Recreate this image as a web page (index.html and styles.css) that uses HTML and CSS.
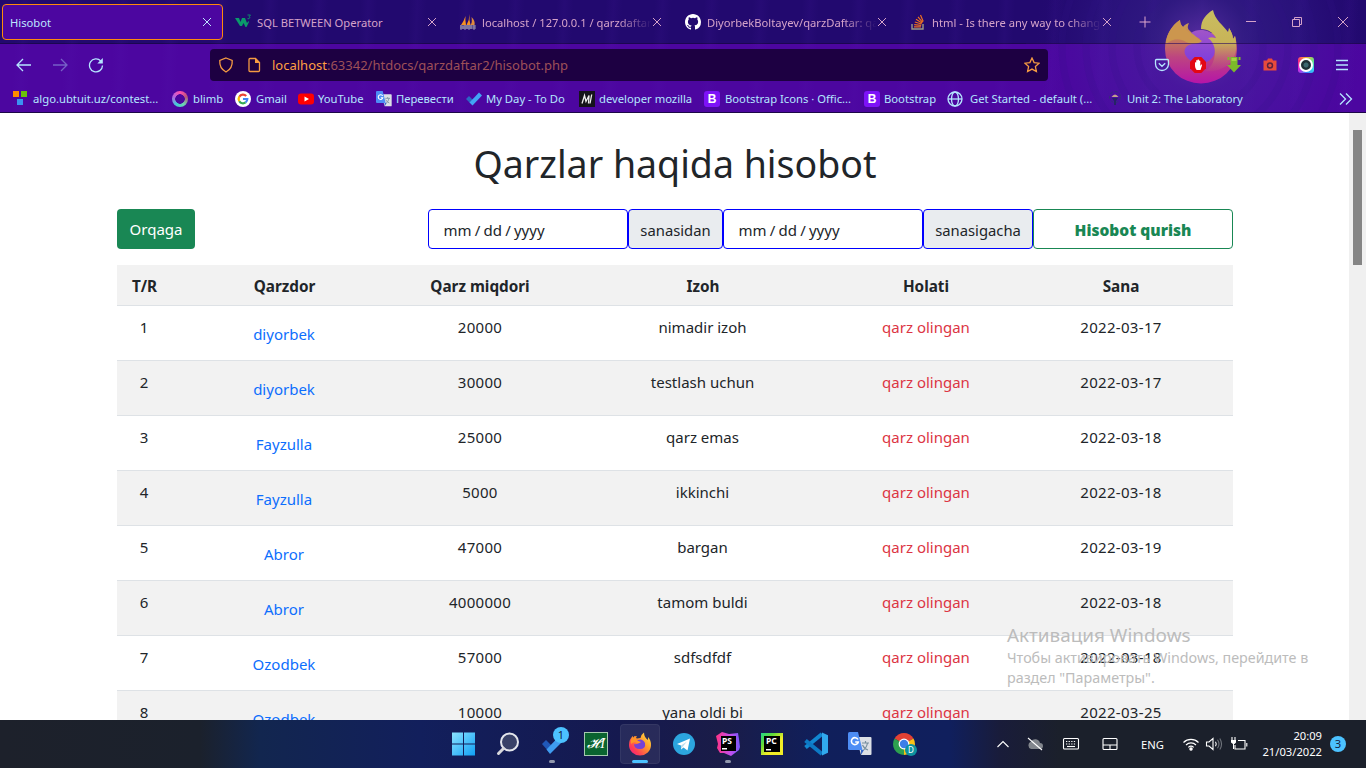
FILE: index.html
```html
<!DOCTYPE html>
<html lang="uz">
<head>
<meta charset="utf-8">
<title>Hisobot</title>
<link rel="stylesheet" href="styles.css">
</head>
<body>
<div class="screen">
<header class="browser">
  <svg class="theme-art" width="340" height="112" viewBox="0 0 340 112">
    <defs>
      <radialGradient id="glow" cx="174" cy="42" r="165" gradientUnits="userSpaceOnUse"><stop offset="0" stop-color="#6a38b0" stop-opacity=".8"/><stop offset=".3" stop-color="#43309a" stop-opacity=".4"/><stop offset=".65" stop-color="#402bA0" stop-opacity=".22"/><stop offset="1" stop-color="#35108c" stop-opacity="0"/></radialGradient>
      <linearGradient id="fx" x1="0" y1="18" x2="0" y2="83" gradientUnits="userSpaceOnUse"><stop offset="0" stop-color="#c9a452"/><stop offset=".3" stop-color="#c68254"/><stop offset=".6" stop-color="#bd4580"/><stop offset="1" stop-color="#b615a8"/></linearGradient>
      <linearGradient id="fy" x1="0" y1="10" x2="0" y2="74" gradientUnits="userSpaceOnUse"><stop offset="0" stop-color="#c9bd60"/><stop offset=".5" stop-color="#c8b458"/><stop offset="1" stop-color="#bc3f87" stop-opacity=".2"/></linearGradient>
      <linearGradient id="fp" x1="0" y1="30" x2="0" y2="62" gradientUnits="userSpaceOnUse"><stop offset="0" stop-color="#a055c8"/><stop offset="1" stop-color="#7e3ddd"/></linearGradient>
    </defs>
    <rect width="340" height="112" fill="url(#glow)"/>
    <g fill="none" stroke="#2f118b" stroke-opacity=".16" stroke-width="7"><circle cx="174" cy="47" r="63"/><circle cx="174" cy="47" r="88"/><circle cx="174" cy="47" r="114"/><circle cx="174" cy="47" r="138"/></g>
    <g transform="translate(114 0)">
      <path d="M40 20c-9 6-15 16-15 29a36 34.500 0 0 0 72 0c0-5-1-9-2-13l-2 3c0-4-2-8-4-11v5L74 33H52l-3-3c-2-2-1-5 0-7-3 1-5 2-6 4-2-2-3-4-3-7z" fill="url(#fx)"/>
      <path d="M73 10c-7 4-12 10-12 19 7 0 13 4 15 9-4-1-7-1-9 0 7 5 10 15 6 24-2 5-5 7-8 9 16 2 31-8 31-23 0-5 0-8-1-12l-2 3c0-4-2-8-4-11l-1 4c-5-7-13-12-15-22z" fill="url(#fy)"/>
      <path d="M51 33c6-5 20-4 25 5-3-1-5-1-8 0 7 5 9 15 4 20-7 8-20 7-26-2-3-5-1-9 3-11 4-2 8-1 12-4-2-5-8-3-10-8z" fill="url(#fp)"/>
      <path d="M40 20c-8 5-14 15-14 24 7-6 14-6 20-2 6 3 13 2 16-1-5-2-7-7-13-9-3-2-5-5-6-5-2-2-3-4-3-7z" fill="#cc964e"/>
    </g>
    <path d="M0 43h340v1H0z" fill="#24075d" opacity=".6"/>
  </svg>
  <div class="tabs">
    <div class="tab active"><span class="tab-title">Hisobot</span><i class="x">
      <svg width="10" height="10" viewBox="0 0 10 10"><path d="M1 1l8 8M9 1L1 9"/></svg></i></div>
    <div class="tab">
      <svg class="fav" width="16" height="16" viewBox="0 0 16 16"><path d="M0 4h4l1.500 4L7 4h3l2 5 1.500-2 .5 1-2.500 5h-1L8.500 9 7 12H5z" fill="#0b9a6b"/><path d="M12.500 1h3L14 2.700q2 .5 0 2h-1.500" fill="none" stroke="#0b9a6b" stroke-width=".9"/></svg>
      <span class="tab-title">SQL BETWEEN Operator</span><i class="x"><svg width="10" height="10" viewBox="0 0 10 10"><path d="M1 1l8 8M9 1L1 9"/></svg></i></div>
    <div class="tab">
      <svg class="fav" width="16" height="16" viewBox="0 0 16 16"><path d="M5.500 2Q5 6 6 11H1Q4 7 5.500 2zM9.500 0Q9 6 10.500 11H6.500Q9.500 6 9.500 0z" fill="#f59222"/><path d="M11.500 3q4 4 3 8h-4q2-3 1-8z" fill="#e08b3c"/><path d="M0 12h16M1 11v5m2-4v3m2-4v5m2-5v4m2-4v5m2-5v4m3-4v5M0 14h16" stroke="#a5a5b9" stroke-width=".9"/></svg>
      <span class="tab-title fade">localhost / 127.0.0.1 / qarzdaftar</span><i class="x"><svg width="10" height="10" viewBox="0 0 10 10"><path d="M1 1l8 8M9 1L1 9"/></svg></i></div>
    <div class="tab">
      <svg class="fav" width="16" height="16" viewBox="0 0 16 16"><path fill="#fff" d="M8 0C3.580 0 0 3.580 0 8c0 3.540 2.290 6.530 5.470 7.590.4.070.55-.17.55-.38 0-.19-.01-.82-.01-1.490-2.010.37-2.530-.49-2.690-.94-.09-.23-.48-.94-.82-1.130-.28-.15-.68-.52-.01-.53.63-.01 1.080.58 1.230.82.72 1.210 1.870.87 2.330.66.070-.52.28-.87.51-1.070-1.780-.2-3.640-.89-3.640-3.950 0-.87.31-1.590.82-2.150-.08-.2-.36-1.020.08-2.120 0 0 .67-.21 2.200.82a7.600 7.600 0 0 1 4 0c1.530-1.040 2.200-.82 2.200-.82.44 1.100.16 1.920.08 2.120.51.56.82 1.270.82 2.150 0 3.070-1.870 3.750-3.650 3.950.29.25.54.73.54 1.480 0 1.070-.01 1.930-.01 2.200 0 .21.15.46.55.38A8 8 0 0 0 16 8c0-4.420-3.580-8-8-8z"/></svg>
      <span class="tab-title fade">DiyorbekBoltayev/qarzDaftar: qarz</span><i class="x"><svg width="10" height="10" viewBox="0 0 10 10"><path d="M1 1l8 8M9 1L1 9"/></svg></i></div>
    <div class="tab">
      <svg class="fav" width="16" height="16" viewBox="0 0 16 16" fill="none"><path d="M2 10v5h11v-5" stroke="#9a9a86" stroke-width="1.400"/><path d="M4 12.800h7M4.200 10.600l7 .8M4.800 8l6.800 2M6 5.300l6 3.800M8 2.800l4.600 5.500M10.500 1l2.700 6.500" stroke="#ee6f20" stroke-width="1.200"/></svg>
      <span class="tab-title fade">html - Is there any way to change</span><i class="x"><svg width="10" height="10" viewBox="0 0 10 10"><path d="M1 1l8 8M9 1L1 9"/></svg></i></div>
    <svg class="plus" width="12" height="12" viewBox="0 0 12 12"><path d="M6 .5v11M.5 6h11"/></svg>
    <div class="win">
      <svg width="12" height="12" viewBox="0 0 12 12"><path d="M1 5.500h10"/></svg>
      <svg width="12" height="12" viewBox="0 0 12 12"><path d="M1.500 3.500h7v7h-7zM3.500 3.500v-2h7v7h-2"/></svg>
      <svg width="12" height="12" viewBox="0 0 12 12"><path d="M1 1l10 10M11 1L1 11"/></svg>
    </div>
  </div>
  <div class="nav">
    <svg class="ic" width="16" height="16" viewBox="0 0 16 16"><path d="M15 8H1.500M7 2L1 8l6 6"/></svg>
    <svg class="ic dim" width="16" height="16" viewBox="0 0 16 16"><path d="M1 8h13.500M9 2l6 6-6 6"/></svg>
    <svg class="ic" width="16" height="16" viewBox="0 0 16 16"><path d="M12.800 4A6.500 6.500 0 1 0 14.500 8.500"/><path d="M14.800 1v5.500H9.300z" fill="#b5e6ff" stroke="none"/></svg>
    <div class="url">
      <svg width="16" height="16" viewBox="0 0 16 16"><path d="M8 1l6.200 2.500c.4 5-1.500 9-6.200 11.500C3.300 12.500 1.400 8.500 1.800 3.500z"/></svg>
      <svg width="14" height="16" viewBox="0 0 14 16"><path d="M3 1.500h5.500L12.500 5.500v8q0 1-1 1H3q-1 0-1-1v-11q0-1 1-1z"/><path d="M8 1l5 5H8z" fill="#f59a42" stroke="none"/></svg>
      <span class="addr"><b>localhost</b>:63342/htdocs/qarzdaftar2/hisobot.php</span>
      <svg class="star" width="16" height="16" viewBox="0 0 16 16"><path d="M8 1l2.100 4.600 5 .6-3.700 3.400 1 5L8 12.100l-4.400 2.500 1-5L.9 6.200l5-.6z"/></svg>
    </div>
    <div class="ext">
      <svg class="ic" width="16" height="16" viewBox="0 0 16 16"><path d="M2.500 2.500h11q1 0 1 1V7a6.500 6.500 0 0 1-13 0V3.500q0-1 1-1zM4.800 6.200L8 9.300l3.200-3.100"/></svg>
      <svg width="16" height="16" viewBox="0 0 16 16"><path d="M4.700 0h6.600L16 4.700v6.600L11.300 16H4.700L0 11.300V4.700z" fill="#e30713"/><path d="M5 5.500q.7-.7 1.200 0V3.500q.7-.8 1.300 0V2.800q.8-.8 1.500 0v1q.8-.7 1.300.1v5l.9-1.300q1-.4.9.5L10.500 13H6.600Q5 11 5 9z" fill="#fff"/></svg>
      <svg width="16" height="16" viewBox="0 0 16 16"><path d="M1.500 0h2v3h-2zM12.500 0h2v3h-2zM4.500 0h7v8H15l-7 7.500L1 8h3.500z" fill="#7cbb2a"/><path d="M5.500 1h5v3h-5z" fill="#a2d343"/></svg>
      <svg width="16" height="16" viewBox="0 0 16 16"><path d="M1.500 3.500H5l1-2h4l1 2h3.500v10h-13z" fill="#e84b3c"/><circle cx="8" cy="8.500" r="3.200" fill="#5a2140"/><circle cx="8" cy="8.500" r="1.700" fill="#e84b3c"/></svg>
      <i class="lens"><i></i></i>
      <svg class="ic" width="16" height="16" viewBox="0 0 16 16"><path d="M2 3.500h12M2 8h12M2 12.500h12"/></svg>
    </div>
  </div>
  <div class="bookmarks">
    <a class="w1"><svg width="16" height="16" viewBox="0 0 16 16"><path fill="#ff8c00" d="M1 0h6v6H1z"/><path fill="#6bc10b" d="M9 0h6v6H9z"/><path fill="#3b92f2" d="M5 8h6v6H5z"/></svg>algo.ubtuit.uz/contest...</a>
    <a class="w2"><i class="ring"></i>blimb</a>
    <a class="w3"><svg width="16" height="16" viewBox="0 0 16 16" fill="none" stroke-width="2.200"><circle cx="8" cy="8" r="8" fill="#fff"/><path d="M11.200 5A4.300 4.300 0 0 0 4.300 5.700" stroke="#ea4335"/><path d="M4.300 5.700a4.300 4.300 0 0 0 0 4.500" stroke="#fbbc05"/><path d="M4.300 10.200a4.300 4.300 0 0 0 6.300 1.200" stroke="#34a853"/><path d="M10.600 11.400q1.600-1.200 1.700-3.400H8" stroke="#4285f4"/></svg>Gmail</a>
    <a class="w4"><svg width="16" height="16" viewBox="0 0 16 16"><rect y="2.500" width="16" height="11" rx="3" fill="#f00"/><path d="M6.500 5.500v5L11 8z" fill="#fff"/></svg>YouTube</a>
    <a class="w5"><svg width="16" height="16" viewBox="0 0 24 24"><use href="#gt"/></svg>Перевести</a>
    <a class="w6"><svg width="16" height="16" viewBox="0 0 16 16"><path d="M0 8l3-3 4 4-3 3z" fill="#2b67c4"/><path d="M3.500 11.500L13 1.500l3 3-9.500 10z" fill="#42a5f5"/></svg>My Day - To Do</a>
    <a class="w7"><svg width="16" height="16" viewBox="0 0 16 16"><path fill="#15141a" d="M0 0h16v16H0z"/><path d="M3 12.500L5.500 4.500 7 10.500l3-6-.5 8M12.700 3.500l-1.700 9" fill="none" stroke="#eee" stroke-width="1.300"/></svg>developer mozilla</a>
    <a class="w8"><i class="bs">B</i>Bootstrap Icons · Offic...</a>
    <a class="w9"><i class="bs">B</i>Bootstrap</a>
    <a class="w10"><svg class="ic" width="16" height="16" viewBox="0 0 16 16"><circle cx="8" cy="8" r="7"/><ellipse cx="8" cy="8" rx="3.500" ry="7"/><path d="M1 8h14"/></svg>Get Started - default (...</a>
    <a class="w11"><svg width="16" height="16" viewBox="0 0 16 16"><circle cx="8" cy="6" r="5.500" fill="none" stroke="#333078" stroke-dasharray="3 2"/><path d="M4.500 6q3.500-5 7 0z" fill="#c3a18c"/><path d="M5 7h6l-2 3v4H7v-4z" fill="#252466"/></svg>Unit 2: The Laboratory</a>
    <svg class="ic more" width="16" height="16" viewBox="0 0 16 16"><path d="M2 2.500L7.500 8 2 13.500M8 2.500L13.500 8 8 13.500"/></svg>
  </div>
</header>

<main class="viewport">
  <div class="page">
    <h1>Qarzlar haqida hisobot</h1>
    <div class="toolbar">
      <a class="btn">Orqaga</a>
      <form class="filter">
        <span class="date"><s>mm</s><s>/</s><s>dd</s><s>/</s><s>yyyy</s></span>
        <span class="addon a1">sanasidan</span>
        <span class="date"><s>mm</s><s>/</s><s>dd</s><s>/</s><s>yyyy</s></span>
        <span class="addon a2">sanasigacha</span>
        <span class="submit">Hisobot qurish</span>
      </form>
    </div>
    <table>
      <colgroup><col class="c1"><col class="c2"><col class="c3"><col class="c4"><col class="c5"><col class="c6"></colgroup>
      <tr><th>T/R</th><th>Qarzdor</th><th>Qarz miqdori</th><th>Izoh</th><th>Holati</th><th>Sana</th></tr>
      <tr><td>1</td><td><a>diyorbek</a></td><td class="num">20000</td><td>nimadir izoh</td><td class="red">qarz olingan</td><td class="num">2022-03-17</td></tr>
      <tr><td>2</td><td><a>diyorbek</a></td><td class="num">30000</td><td>testlash uchun</td><td class="red">qarz olingan</td><td class="num">2022-03-17</td></tr>
      <tr><td>3</td><td><a>Fayzulla</a></td><td class="num">25000</td><td>qarz emas</td><td class="red">qarz olingan</td><td class="num">2022-03-18</td></tr>
      <tr><td>4</td><td><a>Fayzulla</a></td><td class="num">5000</td><td>ikkinchi</td><td class="red">qarz olingan</td><td class="num">2022-03-18</td></tr>
      <tr><td>5</td><td><a>Abror</a></td><td class="num">47000</td><td>bargan</td><td class="red">qarz olingan</td><td class="num">2022-03-19</td></tr>
      <tr><td>6</td><td><a>Abror</a></td><td class="num">4000000</td><td>tamom buldi</td><td class="red">qarz olingan</td><td class="num">2022-03-18</td></tr>
      <tr><td>7</td><td><a>Ozodbek</a></td><td class="num">57000</td><td>sdfsdfdf</td><td class="red">qarz olingan</td><td class="num">2022-03-18</td></tr>
      <tr><td>8</td><td><a>Ozodbek</a></td><td class="num">10000</td><td>yana oldi bi</td><td class="red">qarz olingan</td><td class="num">2022-03-25</td></tr>
    </table>
  </div>
  <div class="scroll"><i></i></div>
  <div class="activate"><strong>Активация Windows</strong><p>Чтобы активировать Windows, перейдите в<br>раздел "Параметры".</p></div>
</main>

<footer class="taskbar">
  <div class="apps">
    <span><svg width="24" height="24" viewBox="0 0 24 24"><defs><linearGradient id="w" x1="0" y1="0" x2="1" y2="1"><stop offset="0" stop-color="#8be3ff"/><stop offset="1" stop-color="#10a0f5"/></linearGradient></defs><path d="M0 .500h11v11H0zM12 .500h11v11h-11zM0 12.500h11v11H0zM12 12.500h11v11h-11z" fill="url(#w)"/></svg></span>
    <span><svg width="24" height="24" viewBox="0 0 24 24"><circle cx="13.500" cy="10" r="8.500" fill="#394168" stroke="#e3e5ec" stroke-width="2"/><path d="M7.500 16.500l-5 5" stroke="#d8d8dc" stroke-width="3" stroke-linecap="round"/></svg></span>
    <span><svg width="24" height="24" viewBox="0 0 24 24"><path d="M2 12l4-4 7 7-4 5z" fill="#2058b8"/><path d="M6.500 17.500L17 6.500l5 3.500L10 22z" fill="#3f9cf0"/></svg><em class="count">1</em><u></u></span>
    <span><i class="ht">𝓗I</i></span>
    <span class="on"><svg width="24" height="24" viewBox="0 0 24 24"><defs><linearGradient id="ff" x1="1" y1="0" x2="0" y2="1"><stop offset="0" stop-color="#fff04a"/><stop offset=".4" stop-color="#ff9a2c"/><stop offset=".75" stop-color="#ff3c56"/><stop offset="1" stop-color="#e81a90"/></linearGradient></defs><path d="M5 4q-4 3-4 9a11 10.500 0 0 0 22 0q0-5-3-8v3Q16 5 16 .5q-3 2-3.500 5.500L9 6.500Q7 6 7.500 4 6 4 5 6z" fill="url(#ff)"/><path d="M8 9q6-4 9 2 1 6-5 6t-6-5q2 1 5-1z" fill="#7542d8"/><path d="M5 4q-3 4-2 8 3-3 6-1 2 1 4-1-4-1-5-3 0-2 1-3-3 0-4 2z" fill="#ff9328"/></svg><u></u></span>
    <span><svg width="24" height="24" viewBox="0 0 24 24"><circle cx="12" cy="12" r="11" fill="#2ca5de"/><path d="M5 12l13-5.500-2.500 12-4-3-2.500 2v-4z" fill="#fff"/><path d="M9 13.500l6-4-4.500 5.500-1.500 2z" fill="#b8dced"/></svg></span>
    <span><svg width="24" height="24" viewBox="0 0 24 24"><defs><linearGradient id="ps"><stop offset="0" stop-color="#ff3183"/><stop offset=".6" stop-color="#c34fee"/><stop offset="1" stop-color="#7657fa"/></linearGradient></defs><path d="M0 4L6 0l7 2 9-1 1 6 1 8-1 3-4 3-4 3-7-3-4 0-3-5 1-4z" fill="url(#ps)"/><path d="M5 4h15v15H5z"/><path d="M6 16h5v1.500H6z" fill="#fff"/></svg><b class="ide">PS</b><u></u></span>
    <span><svg width="24" height="24" viewBox="0 0 24 24"><defs><linearGradient id="pc" x1="0" y1="0" x2="1" y2="1"><stop offset="0" stop-color="#21d789"/><stop offset=".3" stop-color="#62db38"/><stop offset=".6" stop-color="#f1ed27"/></linearGradient></defs><path d="M1 1h22v22H1z" fill="url(#pc)"/><path d="M4 4h16v16H4z"/><path d="M6 17h5v1.500H6z" fill="#fff"/></svg><b class="ide">PC</b></span>
    <span><svg width="24" height="24" viewBox="0 0 24 24"><path d="M1.500 15.500L18 2" stroke="#1187d2" stroke-width="4"/><path d="M1.500 8.500L18 22" stroke="#0d79c5" stroke-width="4"/><path d="M18 .5l6 2.800v17.400l-6 2.800z" fill="#31a9ee"/></svg></span>
    <span><svg width="24" height="24" viewBox="0 0 24 24"><g id="gt"><path d="M8 5h14.500q1 0 1 1v16q0 1-1 1H13z" fill="#dce0e6"/><path d="M1.500 0H10l4.500 18h-13Q0 18 0 16.500v-15Q0 0 1.500 0z" fill="#4d8df5"/><path d="M13 18h3l-3 5z" fill="#3566c7"/><path d="M10 7.500A3.500 3.500 0 1 0 10.300 10H7.200" fill="none" stroke="#fff" stroke-width="1.600"/><path d="M14 11h7M17.500 9v2m2 0q-1 5-4 7m-1-5q2 4 5.500 5" fill="none" stroke="#77909f" stroke-width="1.200"/></g></svg></span>
    <span><svg width="24" height="24" viewBox="0 0 24 24"><path d="M12 12L2.500 6.500a11 11 0 0 1 19 0z" fill="#e34133"/><path d="M12 12L21.500 6.500A11 11 0 0 1 12 23z" fill="#fbc116"/><path d="M12 12l0 11A11 11 0 0 1 2.500 6.500z" fill="#2da04f"/><circle cx="12" cy="12" r="5.400" fill="#fff"/><circle cx="12" cy="12" r="4.200" fill="#3c7ee8"/></svg><em class="d">D</em></span>
  </div>
  <div class="tray">
    <svg class="t1" width="14" height="14" viewBox="0 0 14 14"><path d="M1.500 10L7 4.500l5.500 5.500"/></svg>
    <svg class="t2" width="18" height="16" viewBox="0 0 18 16"><path d="M5 13a4 4 0 0 1 0-7.500 5 5 0 0 1 9 1.500 3 3 0 0 1 0 6z" fill="#82868d" stroke="none"/><path d="M2 2l14 12"/></svg>
    <svg class="t3" width="18" height="16" viewBox="0 0 18 16"><rect x="1.500" y="2.500" width="15" height="10.500" rx="1"/><path d="M4 5.500h10M4 8h10" stroke-dasharray="1.300 1.300"/><path d="M5 10.500h8"/></svg>
    <svg class="t4" width="18" height="16" viewBox="0 0 18 16"><rect x="2" y="2.500" width="14" height="11" rx="1"/><path d="M2 9h14M9 9v4.500"/></svg>
    <span class="eng">ENG</span>
    <svg class="t5" width="18" height="16" viewBox="0 0 18 16"><path d="M1.500 6.500a10.500 10.500 0 0 1 15 0M4 9a7 7 0 0 1 10 0M6.300 11.300a4 4 0 0 1 5.400 0"/><circle cx="9" cy="13" r="1.200" fill="#fff"/></svg>
    <svg class="t6" width="18" height="16" viewBox="0 0 18 16"><path d="M1.500 6H4l4-3.500v11L4 10H1.500zM10.500 5.800q1.500 2.200 0 4.400"/><path d="M12.500 3.800q3 4.200 0 8.400M14.800 2.500q3.500 5.500 0 11" stroke="#70747c"/></svg>
    <svg class="t7" width="18" height="16" viewBox="0 0 18 16"><path d="M8 4.500h7v8.500H5V9M16.800 7v3.500"/><path d="M2 1v3m3-3v3" /><path d="M1 4h5v2.500L4.500 8H4v5H3V8L1 6.500z" fill="#fff" stroke="none"/></svg>
    <div class="clock">20:09<br>21/03/2022</div>
    <em class="notif">3</em>
  </div>
</footer>
</div>
</body>
</html>
```
FILE: styles.css
```css
* { box-sizing: border-box; }
body { margin: 0; font-family: "Noto Sans", sans-serif; }
i, em { font-style: normal; }
s, u { text-decoration: none; }
svg { display: block; flex: none; }
.screen { width: 1366px; height: 768px; overflow: hidden; display: flex; flex-direction: column; }

/* browser chrome */
.browser {
  position: relative; height: 113px; flex: none;
  border-bottom: 1px solid #1c0748;
  background:
    repeating-linear-gradient(93deg, transparent 0 17px, rgba(90, 35, 185, .08) 25px, transparent 34px 49px),
    linear-gradient(#22096f 0 43px, #1b0650 43px 44px, #4c06a0 44px);
}
.theme-art { position: absolute; right: 0; top: 0; }
.tabs, .nav, .bookmarks { position: relative; display: flex; align-items: center; }
.tabs { height: 44px; padding-left: 2px; gap: 4px; }
.tab {
  width: 221px; height: 36px; padding: 0 11px 0 8px; flex: none;
  display: flex; align-items: center; gap: 6px;
  color: #d5a3c9; font-size: 11.2px;
}
.tab.active { background: #4c06a0; border: 1px solid #ff8a0a; border-radius: 4px; color: #bde5ff; padding: 0 10px 0 7px; }
.tab-title { flex: 1; overflow: hidden; white-space: nowrap; }
.tab-title.fade { margin-right: -6px; -webkit-mask-image: linear-gradient(90deg, #000 80%, transparent); mask-image: linear-gradient(90deg, #000 80%, transparent); }
.x svg, .plus, .win svg { fill: none; stroke: currentColor; stroke-width: 1; }
.plus { margin: 0 0 0 12px; color: #e0a9cd; }
.win { display: flex; gap: 34px; margin-left: auto; padding-right: 17px; color: #d5a3c9; }
.nav { height: 41px; padding-left: 16px; gap: 20px; }
.ic { fill: none; stroke: #b5e6ff; stroke-width: 1.3; }
.dim { opacity: .4; }
.url {
  width: 838px; height: 32px; margin-left: 86px; padding: 0 8px; border-radius: 4px;
  display: flex; align-items: center; background: #1d0042; color: #9e5058; font-size: 13px;
}
.url svg { fill: none; stroke: #f59a42; stroke-width: 1.3; }
.url svg + svg { margin-left: 13px; }
.addr { margin-left: 11px; flex: 1; }
.addr b { font-weight: 400; color: #ff9f43; }
.ext { display: flex; gap: 20px; margin-left: 86px; }
.lens { width: 16px; height: 16px; border-radius: 3px; display: grid; place-items: center; background: conic-gradient(#f9b52d, #65e087, #36d7f1, #397bff, #d928de, #f92f7d, #f9b52d); }
.lens i { width: 14px; height: 14px; border: 2px solid #fff; border-radius: 50%; background: radial-gradient(#3d6870 0 2px, #1f3138 3px); }
.bookmarks { height: 27px; padding-left: 12px; color: #b3e6ff; font-size: 11.25px; }
.bookmarks a { display: flex; align-items: center; gap: 5px; flex: none; white-space: nowrap; }
.w1 { width: 160px; } .w2 { width: 63px; } .w3 { width: 63px; } .w4 { width: 78px; }
.w5 { width: 90px; } .w6 { width: 113px; } .w7 { width: 125px; } .w8 { width: 160px; }
.w9 { width: 83px; } .w10 { width: 160px; } .w11 { width: 231px; }
.bookmarks .w4, .bookmarks .w5, .bookmarks .w6, .bookmarks .w7, .bookmarks .w9, .bookmarks .w11 { gap: 4px; }
.bookmarks .w10 { gap: 7px; }
.bookmarks .w11 { letter-spacing: -.1px; }
.ring { width: 16px; height: 16px; border-radius: 50%; background: radial-gradient(#4c06a0 0 4.5px, transparent 5px), conic-gradient(#ff4fae, #b9557a, #6bd3b0, #43c9d8, #b164e0, #ff4fae); }
.bs { width: 16px; height: 16px; border-radius: 3px; background: #7d12f7; color: #fff; font: bold 12px/16px "Liberation Sans", sans-serif; text-align: center; }

/* report page */
.viewport { position: relative; height: 607px; overflow: hidden; background: #fff; color: #212529; }
.page { width: 1116px; margin-left: 117px; padding-top: 27px; font-size: 15px; line-height: 24px; }
h1 { margin: 0 0 21px; font-weight: 400; font-size: 37.5px; line-height: 48px; text-align: center; }
.toolbar { display: flex; justify-content: space-between; height: 40px; margin-bottom: 16px; line-height: 40px; }
.btn { width: 78px; border-radius: 4px; background: #198754; color: #fff; text-align: center; }
.filter { display: flex; }
.filter > span { border: 1px solid #00f; border-radius: 4px; line-height: 41px; }
.filter .date { width: 200px; padding-left: 14.5px; display: flex; gap: 3.2px; }
.filter .addon { background: #e9ecef; text-align: center; font-size: 14.8px; }
.a1 { width: 95px; } .a2 { width: 110px; }
.filter .submit { width: 200px; border-color: #198754; color: #198754; font-weight: 900; font-size: 15.5px; text-align: center; }
table { width: 1116px; border-collapse: separate; border-spacing: 0; table-layout: fixed; text-align: center; }
.c1 { width: 55px; } .c2 { width: 225px; } .c3 { width: 166px; }
.c4 { width: 280px; } .c5 { width: 166px; } .c6 { width: 224px; }
th, td { padding: 9px 1px 7px 0; vertical-align: top; border-bottom: 1px solid #dee2e6; white-space: nowrap; }
th { height: 41px; font-weight: 700; font-size: 15.3px; }
th, .num { padding-right: 0; }
td { height: 55px; }
.num { letter-spacing: .3px; }
.red { padding-right: 0; }
tr:nth-child(odd) { background: #f2f2f2; }
td a { display: block; padding-top: 7px; color: #0d6efd; }
.red { color: #dc3545; }
.scroll { position: absolute; right: 0; top: 0; width: 17px; height: 607px; padding: 17px 4px; background: #f0f0f0; }
.scroll i { display: block; width: 9px; height: 135px; background: #858585; }
.activate { position: absolute; left: 1007px; top: 507px; color: #bcbcbc; white-space: nowrap; }
.activate strong { display: block; font-weight: 400; font-size: 18.9px; line-height: 28px; padding-top: 1px; margin-bottom: -1px; }
.activate p { margin: 0; font-size: 14.3px; line-height: 20px; }

/* taskbar */
.taskbar {
  height: 48px; flex: none; display: flex; align-items: center; padding-left: 444px;
  background: linear-gradient(90deg, #1d212b 0, #1b212c 200px, #12264f 260px, #121f5c 420px, #15194f 620px, #1a1c48 720px, #101f5b 820px, #101f5d 950px, #191c3a 1000px, #1b202b 1060px);
  color: #fff;
}
.apps { display: flex; gap: 4px; }
.apps span { position: relative; width: 40px; height: 40px; display: grid; place-items: center; }
.on { background: rgba(255, 255, 255, .08); border-radius: 4px; box-shadow: inset 0 0 0 1px rgba(255, 255, 255, .06); }
.apps u { position: absolute; left: 17px; bottom: 1px; width: 6px; height: 3px; border-radius: 2px; background: #9298ad; }
.apps .on u { left: 12px; width: 16px; background: #4cc2ff; }
.count { position: absolute; left: 21px; top: 3px; width: 16px; height: 16px; border-radius: 50%; background: #4cc2ff; color: #14233f; font-size: 11px; line-height: 16px; text-align: center; }
.ht { width: 24px; height: 24px; border: 1px solid #a5c9af; background: #0a6430; font: italic 14px/21px "Liberation Serif", serif; text-align: center; }
.ide { position: absolute; left: 14px; top: 11px; font-size: 8.5px; line-height: 11px; }
.d { position: absolute; left: 21px; top: 20px; width: 12px; height: 12px; border-radius: 50%; background: #0d929f; font-size: 8px; line-height: 12px; text-align: center; }
.tray { margin-left: auto; display: flex; align-items: center; font-size: 11.2px; padding-right: 20px; }
.tray svg { fill: none; stroke: #fff; stroke-width: 1.1; }
.t2 { margin-left: 16px; }
.tray .t3, .t4 { margin-left: 18px; }
.t4 { margin-left: 21px; }
.eng { width: 24px; margin-left: 22px; }
.t5 { margin-left: 17px; }
.t6 { margin-left: 5px; }
.t7 { margin-left: 7px; }
.clock { width: 66px; margin-left: 8px; text-align: right; line-height: 16px; }
.notif { width: 16px; height: 16px; margin-left: 8px; border-radius: 50%; background: #4cc2ff; color: #14233f; line-height: 16px; text-align: center; }
```
